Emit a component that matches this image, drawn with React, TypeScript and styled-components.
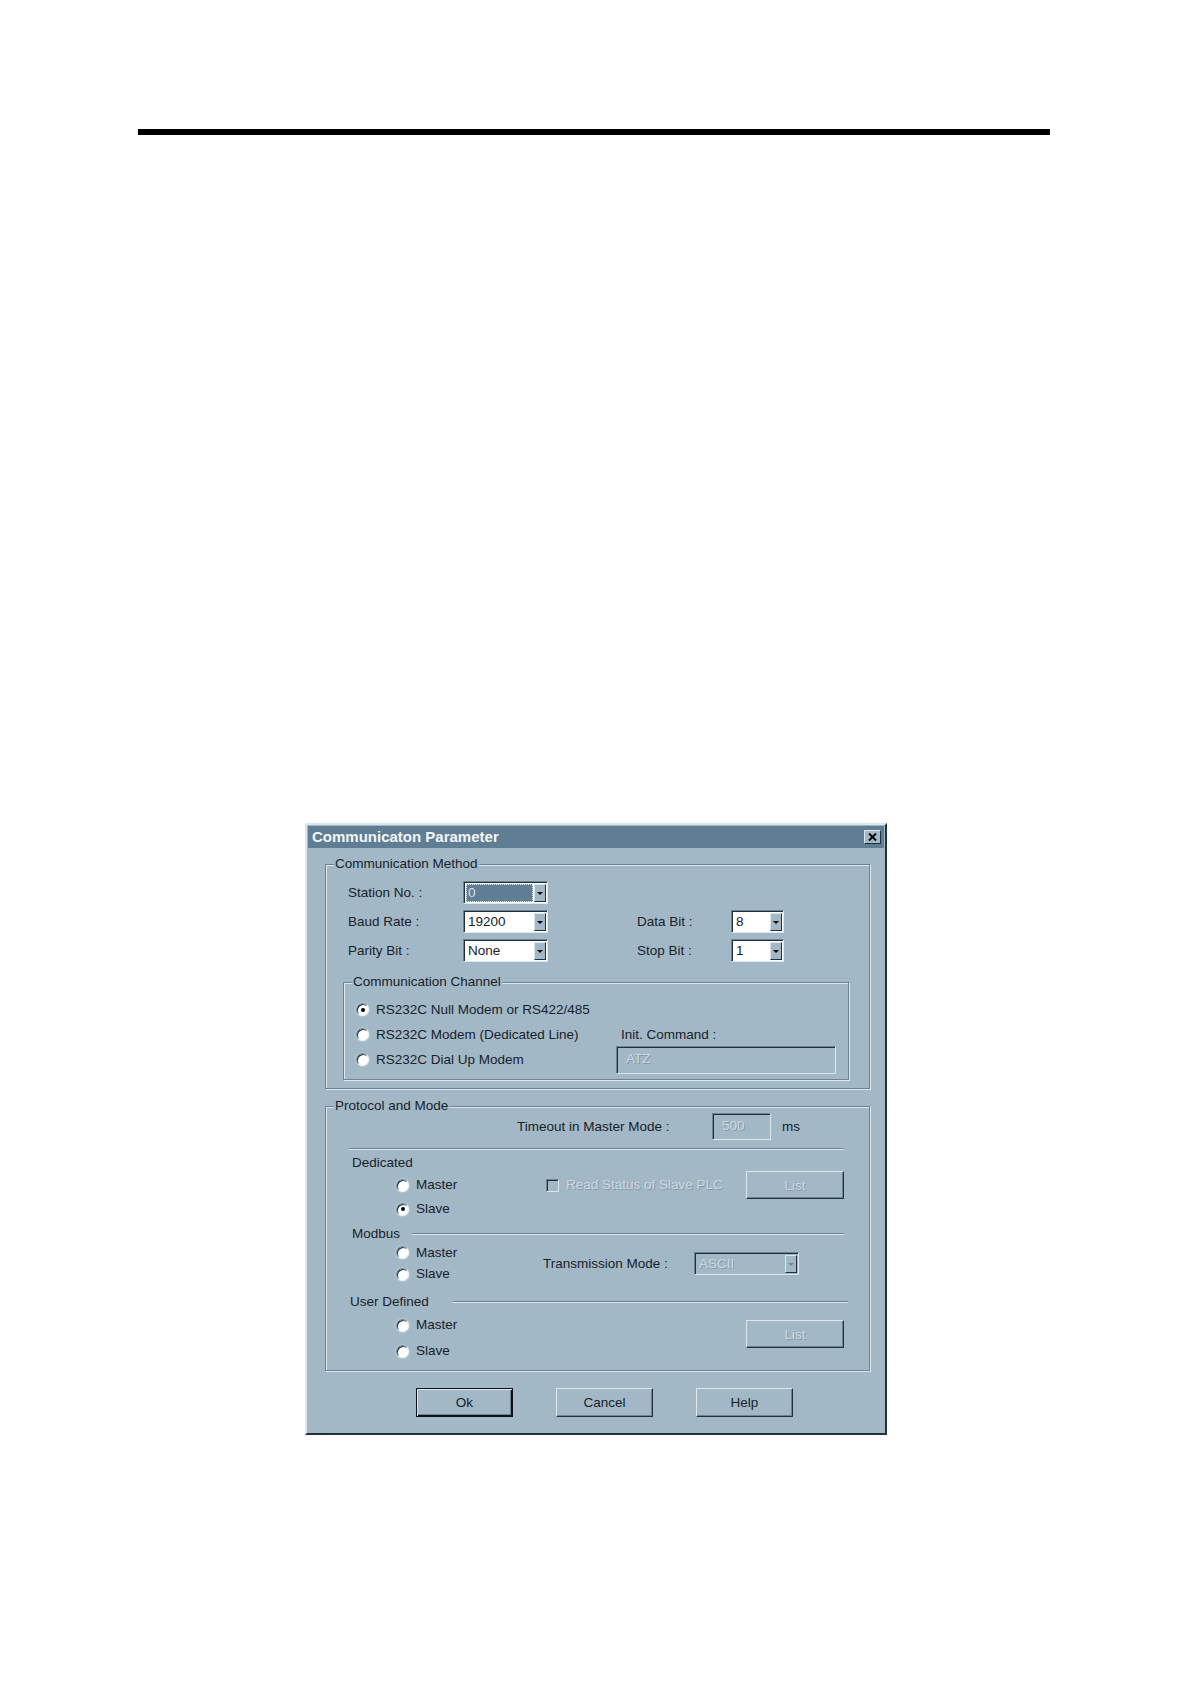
import React from "react"
import styled, { createGlobalStyle, css } from "styled-components"

const face = "#a3b8c6"
const titleBlue = "#5f7e94"
const shade = "#6b8393"
const dark = "#22303a"
const hilite = "#dce6ed"
const ink = "#17222a"
const dim = "#cdd8e0"

const GlobalStyle = createGlobalStyle`
  body {
    margin: 0;
    background: #ffffff;
    font-family: "Liberation Sans", Arial, sans-serif;
  }
`

type Place = { $row?: string; $col?: string }

const place = css<Place>`
  grid-row: ${(p) => p.$row ?? "auto"};
  grid-column: ${(p) => p.$col ?? "auto"};
`

const disabledText = css`
  color: ${dim};
  text-shadow: 1px 1px 0 rgba(90, 114, 132, 0.45);
`

const Page = styled.div`
  width: 1190px;
  min-height: 1684px;
  padding-top: 129px;
  box-sizing: border-box;
`

const TopRule = styled.div`
  margin-left: 138px;
  width: 912px;
  height: 6px;
  background: #000;
`

const Dialog = styled.div`
  margin: 688px 0 0 305px;
  width: 582px;
  height: 612px;
  box-sizing: border-box;
  padding: 1px;
  border: 2px solid;
  border-color: ${hilite} ${dark} ${dark} ${hilite};
  background: ${face};
  color: ${ink};
  font-size: 13.5px;
  line-height: 16px;
`

const TitleBar = styled.div`
  height: 22px;
  display: flex;
  align-items: center;
  justify-content: space-between;
  padding: 0 3px 0 4px;
  background: ${titleBlue};
`

const Title = styled.span`
  font-size: 15px;
  font-weight: bold;
  color: #f3f6f8;
`

const CloseButton = styled.div`
  width: 17px;
  height: 14px;
  box-sizing: border-box;
  display: grid;
  place-items: center;
  background: ${face};
  border: 1px solid;
  border-color: ${hilite} ${dark} ${dark} ${hilite};
`

const Group = styled.div<{ $top: number; $left: number; $right: number; $bottom: number }>`
  margin: ${(p) => p.$top}px ${(p) => p.$right}px 0 ${(p) => p.$left}px;
  padding-bottom: ${(p) => p.$bottom}px;
  border: 1px solid ${shade};
  box-shadow: 1px 1px 0 ${hilite}, inset 1px 1px 0 ${hilite};
`

const GroupCaption = styled.div`
  width: fit-content;
  margin: -9px 0 -7px 8px;
  padding: 0 1px;
  line-height: 16px;
  background: ${face};
  white-space: nowrap;
`

const ParamGrid = styled.div`
  display: grid;
  grid-template-columns: 115px 85px 89px 94px 53px;
  grid-auto-rows: 23px;
  row-gap: 6px;
  padding: 16px 0 0 22px;
  align-items: center;
`

const FieldLabel = styled.span<Place & { $pad?: number }>`
  ${place};
  padding-left: ${(p) => p.$pad ?? 0}px;
  white-space: nowrap;
`

const Combo = styled.div<Place & { $w: number; $disabled?: boolean }>`
  ${place};
  width: ${(p) => p.$w}px;
  height: 23px;
  box-sizing: border-box;
  display: flex;
  padding: 2px 1px 1px 2px;
  border: 1px solid;
  border-color: ${shade} ${hilite} ${hilite} ${shade};
  box-shadow: inset 1px 1px 0 ${dark};
  background: ${(p) => (p.$disabled ? face : "#ffffff")};
`

const ComboText = styled.span<{ $selected?: boolean; $disabled?: boolean }>`
  flex: 1;
  display: flex;
  align-items: center;
  padding-left: 2px;
  color: ${(p) => (p.$selected ? "#d7e2ea" : ink)};
  ${(p) => p.$disabled && disabledText};
  ${(p) =>
    p.$selected &&
    css`
      margin-right: 1px;
      background: ${titleBlue};
      outline: 1px dotted #e8eef2;
      outline-offset: -1px;
    `}
`

const DropButton = styled.span<{ $disabled?: boolean }>`
  width: 12px;
  box-sizing: border-box;
  display: grid;
  place-items: center;
  background: ${face};
  border: 1px solid;
  border-color: ${hilite} ${dark} ${dark} ${hilite};

  &::after {
    content: "";
    border-left: 3px solid transparent;
    border-right: 3px solid transparent;
    border-top: 3px solid ${(p) => (p.$disabled ? "#72889a" : "#000")};
  }
`

const EditBox = styled.div<Place & { $w: number; $h: number }>`
  ${place};
  width: ${(p) => p.$w}px;
  height: ${(p) => p.$h}px;
  box-sizing: border-box;
  display: flex;
  align-items: center;
  padding: 0 0 2px 9px;
  border: 1px solid;
  border-color: ${shade} ${hilite} ${hilite} ${shade};
  box-shadow: inset 1px 1px 0 ${dark};
  background: ${face};
  ${disabledText};
`

const ChannelGrid = styled.div`
  display: grid;
  grid-template-columns: 260px 220px;
  grid-auto-rows: 25px;
  padding: 14px 0 7px 12px;
  align-items: center;
`

const RadioRow = styled.label<Place>`
  ${place};
  display: flex;
  align-items: center;
  gap: 7px;
  white-space: nowrap;
`

const RadioMark = styled.span<{ $on?: boolean }>`
  width: 13px;
  height: 13px;
  box-sizing: border-box;
  display: grid;
  place-items: center;
  border-radius: 50%;
  border: 1px solid;
  border-color: ${shade} #eef3f6 #eef3f6 ${shade};
  box-shadow: inset 1px 1px 0 ${dark}, 0 0 2px rgba(255, 255, 255, 0.8);
  background: #ffffff;

  &::after {
    content: "";
    display: ${(p) => (p.$on ? "block" : "none")};
    width: 4px;
    height: 4px;
    border-radius: 50%;
    background: #000;
  }
`

const CheckRow = styled.label<Place>`
  ${place};
  display: flex;
  align-items: center;
  gap: 7px;
  white-space: nowrap;
  ${disabledText};
`

const CheckMark = styled.span`
  width: 13px;
  height: 13px;
  box-sizing: border-box;
  border: 1px solid;
  border-color: ${shade} ${hilite} ${hilite} ${shade};
  box-shadow: inset 1px 1px 0 ${dark};
  background: ${face};
`

const TimeoutRow = styled.div`
  display: flex;
  align-items: center;
  height: 27px;
  margin-top: 6px;
  padding-left: 191px;
`

const TimeoutLabel = styled.span`
  width: 195px;
  white-space: nowrap;
`

const Unit = styled.span`
  margin-left: 11px;
`

const EtchLine = styled.div<{ $top?: number; $left?: number; $right?: number }>`
  flex: 1;
  margin: ${(p) => p.$top ?? 0}px ${(p) => p.$right ?? 0}px 0 ${(p) => p.$left ?? 0}px;
  border-top: 1px solid ${shade};
  border-bottom: 1px solid ${hilite};
`

const SectionHead = styled.div<{ $top: number; $left: number; $right: number }>`
  display: flex;
  align-items: center;
  height: 16px;
  margin-top: ${(p) => p.$top}px;
  padding: 0 ${(p) => p.$right}px 0 ${(p) => p.$left}px;
  white-space: nowrap;
`

const ModeGrid = styled.div<{ $cols: string; $rows: string; $top: number }>`
  display: grid;
  grid-template-columns: ${(p) => p.$cols};
  grid-template-rows: ${(p) => p.$rows};
  margin-top: ${(p) => p.$top}px;
  padding-left: 70px;
  align-items: center;
`

const PushButton = styled.button<Place & { $w: number; $primary?: boolean; $disabled?: boolean; $offset?: number }>`
  ${place};
  width: ${(p) => p.$w}px;
  height: 28px;
  margin-top: ${(p) => p.$offset ?? 0}px;
  padding: 0;
  box-sizing: border-box;
  font-family: inherit;
  font-size: 13.5px;
  color: ${ink};
  ${(p) => p.$disabled && disabledText};
  background: ${face};
  border: 1px solid;
  border-color: ${hilite} ${dark} ${dark} ${hilite};
  box-shadow: inset -1px -1px 0 ${shade};
  ${(p) =>
    p.$primary &&
    css`
      border-color: #0c1216;
      box-shadow: inset 1px 1px 0 ${hilite}, inset -1px -1px 0 #0c1216, inset -2px -2px 0 ${shade};
    `}
`

const ButtonRow = styled.div`
  display: flex;
  gap: 43px;
  margin-top: 17px;
  padding-left: 108px;

  ${PushButton} {
    height: 29px;
  }
`

const ComboBox = ({
  value,
  width,
  selected,
  disabled,
  col,
}: {
  value: string
  width: number
  selected?: boolean
  disabled?: boolean
  col?: string
}) => (
  <Combo $w={width} $disabled={disabled} $col={col}>
    <ComboText $selected={selected} $disabled={disabled}>
      {value}
    </ComboText>
    <DropButton $disabled={disabled} />
  </Combo>
)

const Radio = ({ label, on, row, col }: { label: string; on?: boolean; row?: string; col?: string }) => (
  <RadioRow $row={row} $col={col}>
    <RadioMark $on={on} />
    {label}
  </RadioRow>
)

const App = () => {
  return (
    <Page>
      <GlobalStyle />
      <TopRule />
      <Dialog>
        <TitleBar>
          <Title>Communicaton Parameter</Title>
          <CloseButton>
            <svg width="9" height="8" viewBox="0 0 9 8">
              <path d="M1 0.5 L8 7.5 M8 0.5 L1 7.5" stroke="#000" strokeWidth="1.9" fill="none" />
            </svg>
          </CloseButton>
        </TitleBar>

        <Group $top={16} $left={17} $right={14} $bottom={8}>
          <GroupCaption>Communication Method</GroupCaption>
          <ParamGrid>
            <FieldLabel $col="1">Station No. :</FieldLabel>
            <ComboBox col="2" width={85} value="0" selected />
            <FieldLabel $col="1">Baud Rate :</FieldLabel>
            <ComboBox col="2" width={85} value="19200" />
            <FieldLabel $col="4">Data Bit :</FieldLabel>
            <ComboBox col="5" width={53} value="8" />
            <FieldLabel $col="1">Parity Bit :</FieldLabel>
            <ComboBox col="2" width={85} value="None" />
            <FieldLabel $col="4">Stop Bit :</FieldLabel>
            <ComboBox col="5" width={53} value="1" />
          </ParamGrid>

          <Group $top={20} $left={17} $right={20} $bottom={0}>
            <GroupCaption>Communication Channel</GroupCaption>
            <ChannelGrid>
              <Radio col="1" label="RS232C Null Modem or RS422/485" on />
              <Radio col="1" label="RS232C Modem (Dedicated Line)" />
              <FieldLabel $col="2" $pad={5}>
                Init. Command :
              </FieldLabel>
              <Radio col="1" label="RS232C Dial Up Modem" />
              <EditBox $col="2" $w={220} $h={28}>
                ATZ
              </EditBox>
            </ChannelGrid>
          </Group>
        </Group>

        <Group $top={17} $left={17} $right={14} $bottom={6}>
          <GroupCaption>Protocol and Mode</GroupCaption>
          <TimeoutRow>
            <TimeoutLabel>Timeout in Master Mode :</TimeoutLabel>
            <EditBox $w={59} $h={27}>
              500
            </EditBox>
            <Unit>ms</Unit>
          </TimeoutRow>
          <EtchLine $top={8} $left={23} $right={25} />

          <SectionHead $top={5} $left={26} $right={25}>
            Dedicated
          </SectionHead>
          <ModeGrid $cols="150px 200px 98px" $rows="24px 24px" $top={2}>
            <Radio row="1" col="1" label="Master" />
            <CheckRow $row="1" $col="2">
              <CheckMark />
              Read Status of Slave PLC
            </CheckRow>
            <PushButton $row="1" $col="3" $w={98} $disabled>
              List
            </PushButton>
            <Radio row="2" col="1" label="Slave" on />
          </ModeGrid>

          <SectionHead $top={5} $left={26} $right={25}>
            Modbus
            <EtchLine $left={12} />
          </SectionHead>
          <ModeGrid $cols="147px 151px 105px" $rows="21px 22px" $top={0}>
            <Radio row="1" col="1" label="Master" />
            <FieldLabel $row="1 / 3" $col="2">
              Transmission Mode :
            </FieldLabel>
            <Combo $row="1 / 3" $col="3" $w={105} $disabled>
              <ComboText $disabled>ASCII</ComboText>
              <DropButton $disabled />
            </Combo>
            <Radio row="2" col="1" label="Slave" />
          </ModeGrid>

          <SectionHead $top={9} $left={24} $right={21}>
            User Defined
            <EtchLine $left={24} />
          </SectionHead>
          <ModeGrid $cols="350px 98px" $rows="26px 26px" $top={2}>
            <Radio row="1" col="1" label="Master" />
            <PushButton $row="1 / 3" $col="2" $w={98} $offset={8} $disabled style={{ alignSelf: "start" }}>
              List
            </PushButton>
            <Radio row="2" col="1" label="Slave" />
          </ModeGrid>
        </Group>

        <ButtonRow>
          <PushButton $w={97} $primary>
            Ok
          </PushButton>
          <PushButton $w={97}>Cancel</PushButton>
          <PushButton $w={97}>Help</PushButton>
        </ButtonRow>
      </Dialog>
    </Page>
  )
}

export default App
